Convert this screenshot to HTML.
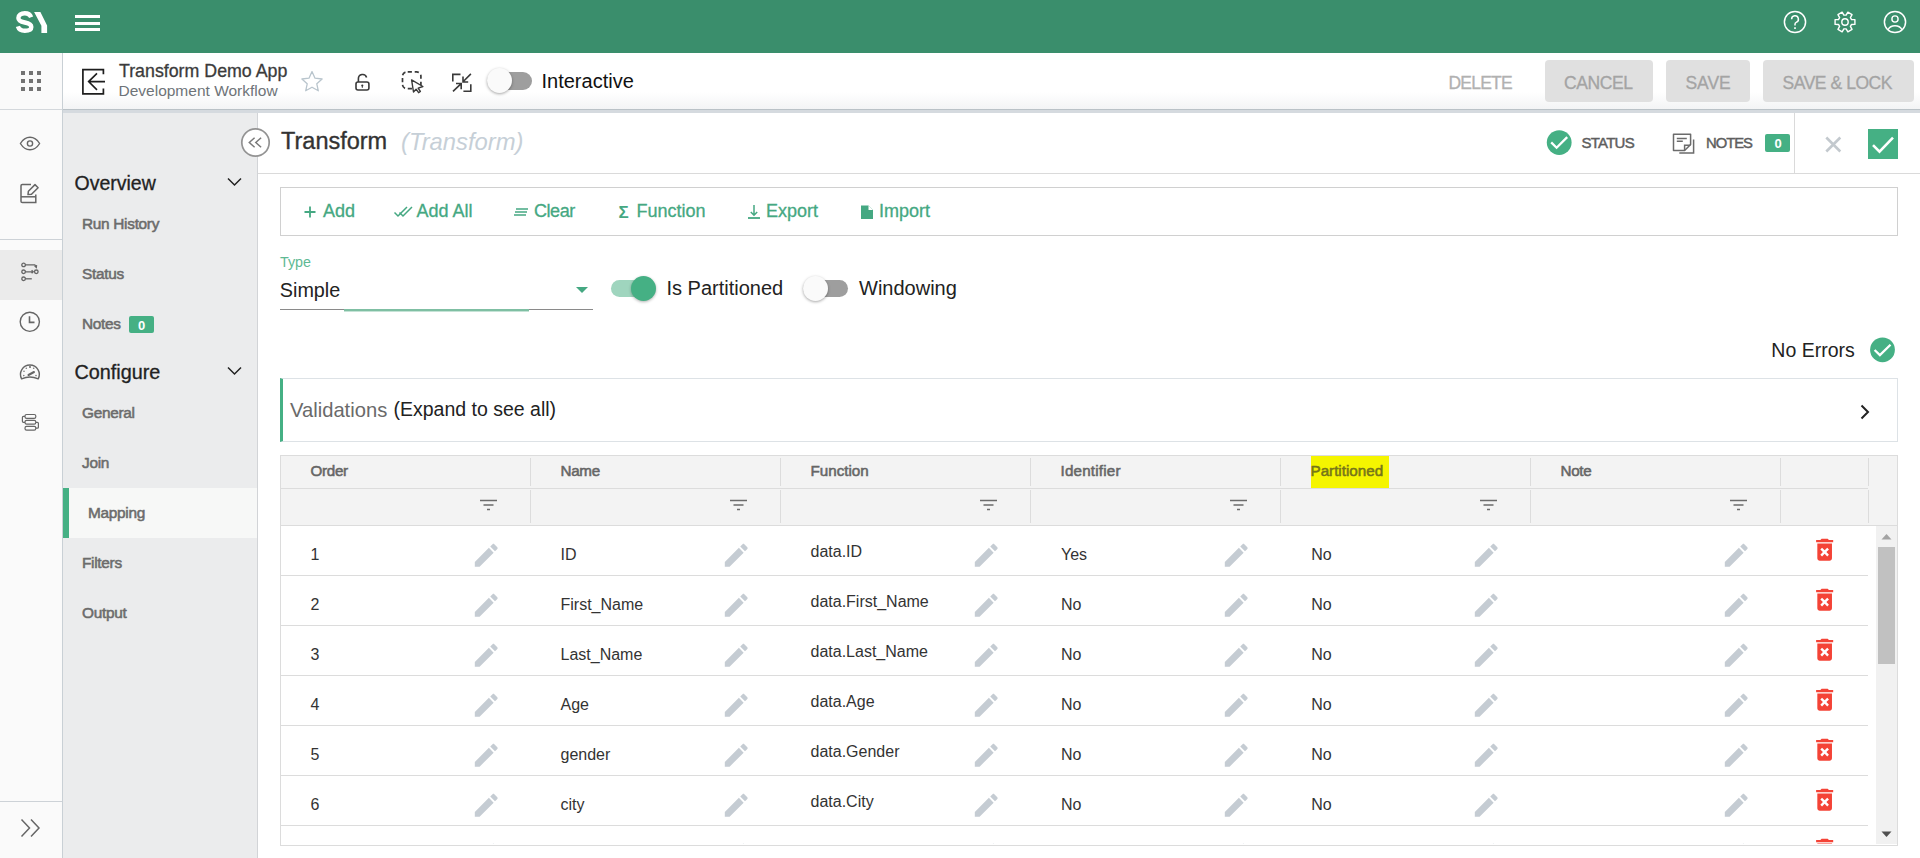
<!DOCTYPE html>
<html><head><meta charset="utf-8"><title>Transform</title>
<style>
html,body{margin:0;padding:0;}
body{width:1920px;height:858px;overflow:hidden;position:relative;background:#fff;font-family:"Liberation Sans",sans-serif;}
.t{position:absolute;line-height:1;white-space:pre;}
.r{position:absolute;display:block;}
</style></head><body>

<div class="r" style="left:0px;top:0px;width:1920px;height:53px;background:#3a8e6c;"></div>
<svg class="r" style="left:0px;top:0px;" width="60" height="53" viewBox="0 0 60 53"><path d="M31.1 17.3C30.2 14.7 27.8 13.3 24.8 13.3C21 13.3 18.4 15.2 18.4 18C18.4 21 21.2 21.8 24.8 22.5C28.6 23.2 31.3 24.3 31.3 27.1C31.3 29.6 28.6 30.8 24.8 30.8C21.4 30.8 18.8 29.4 17.9 26.4" fill="none" stroke="#fff" stroke-width="4.4"/></svg>
<svg class="r" style="left:33px;top:11px;" width="16" height="23" viewBox="0 0 16 23"><polygon points="1.1,1.1 7.4,1.1 14.1,14.4 14.1,21.9 8.4,21.9 8.4,14.8" fill="#fff"/></svg>
<div class="r" style="left:75px;top:15px;width:25px;height:3px;background:#fff;"></div>
<div class="r" style="left:75px;top:21.5px;width:25px;height:3.0px;background:#fff;"></div>
<div class="r" style="left:75px;top:28px;width:25px;height:3px;background:#fff;"></div>
<svg class="r" style="left:1783px;top:10px;" width="24" height="24" viewBox="0 0 24 24"><circle cx="12" cy="12" r="10.6" fill="none" stroke="#fff" stroke-width="1.5"/><path d="M8.6 9.2a3.4 3.4 0 1 1 4.6 3.2c-.8.3-1.2.9-1.2 1.8v1.3" fill="none" stroke="#fff" stroke-width="1.5"/><rect x="11.2" y="17.2" width="1.6" height="1.8" fill="#fff"/></svg>
<svg class="r" style="left:1833px;top:10.2px;" width="24" height="24" viewBox="0 0 24 24"><path d="M18.55 9.53 L21.91 9.58 L21.91 14.42 L18.55 14.47 L17.41 16.44 L19.05 19.37 L14.85 21.79 L13.14 18.91 L10.86 18.91 L9.15 21.79 L4.95 19.37 L6.59 16.44 L5.45 14.47 L2.09 14.42 L2.09 9.58 L5.45 9.53 L6.59 7.56 L4.95 4.63 L9.15 2.21 L10.86 5.09 L13.14 5.09 L14.85 2.21 L19.05 4.63 L17.41 7.56Z" fill="none" stroke="#fff" stroke-width="1.4" stroke-linejoin="round"/><circle cx="12" cy="12" r="3.2" fill="none" stroke="#fff" stroke-width="1.4"/></svg>
<svg class="r" style="left:1883px;top:10px;" width="24" height="24" viewBox="0 0 24 24"><circle cx="12" cy="12" r="10.6" fill="none" stroke="#fff" stroke-width="1.5"/><circle cx="12" cy="9" r="3.1" fill="none" stroke="#fff" stroke-width="1.4"/><path d="M5 19.8c1.3-2.7 3.8-4.1 7-4.1s5.7 1.4 7 4.1" fill="none" stroke="#fff" stroke-width="1.4"/></svg>
<div class="r" style="left:0px;top:53px;width:62px;height:56px;background:#fafafa;"></div>
<div class="r" style="left:62px;top:53px;width:1px;height:805px;background:#c9d0d5;"></div>
<div class="r" style="left:63px;top:53px;width:1857px;height:56px;background:linear-gradient(#fff 0,#fff 70%,#f3f4f5 100%)"></div>
<div class="r" style="left:0px;top:109px;width:62px;height:1px;background:#d4d8dc;"></div>
<div class="r" style="left:63px;top:109px;width:1857px;height:1px;background:#bac2c7;"></div>
<div class="r" style="left:63px;top:110px;width:1857px;height:3px;background:#d5dadf;"></div>
<div class="r" style="left:21px;top:71px;width:4px;height:4px;background:#737373;"></div>
<div class="r" style="left:21px;top:79px;width:4px;height:4px;background:#737373;"></div>
<div class="r" style="left:21px;top:87px;width:4px;height:4px;background:#737373;"></div>
<div class="r" style="left:29px;top:71px;width:4px;height:4px;background:#737373;"></div>
<div class="r" style="left:29px;top:79px;width:4px;height:4px;background:#737373;"></div>
<div class="r" style="left:29px;top:87px;width:4px;height:4px;background:#737373;"></div>
<div class="r" style="left:37px;top:71px;width:4px;height:4px;background:#737373;"></div>
<div class="r" style="left:37px;top:79px;width:4px;height:4px;background:#737373;"></div>
<div class="r" style="left:37px;top:87px;width:4px;height:4px;background:#737373;"></div>
<svg class="r" style="left:80px;top:67px;" width="28" height="30" viewBox="0 0 28 30"><path d="M23.4 7.2V2.6H2.9v24.2h20.5v-5.4" fill="none" stroke="#1e1e1e" stroke-width="1.7"/><path d="M25 14.6H8.6M17 6.4L8.6 14.6l8.4 8.3" fill="none" stroke="#1e1e1e" stroke-width="1.6"/></svg>
<div class="t" style="left:119.0px;top:63.3px;font-size:17.8px;font-weight:400;color:#3b3b3b;letter-spacing:0px;font-style:normal;-webkit-text-stroke:0.3px #3b3b3b;">Transform Demo App</div>
<div class="t" style="left:118.5px;top:82.7px;font-size:15.5px;font-weight:400;color:#6e7378;letter-spacing:0px;font-style:normal;">Development Workflow</div>
<svg class="r" style="left:300px;top:70px;" width="24" height="23" viewBox="0 0 24 23"><path d="M12 1.6l3 6.6 7.1.8-5.3 4.8 1.5 7-6.3-3.6-6.3 3.6 1.5-7L1.9 9l7.1-.8z" fill="none" stroke="#b9c5cd" stroke-width="1.3" stroke-linejoin="round"/></svg>
<svg class="r" style="left:352px;top:71px;" width="20" height="22" viewBox="0 0 20 22"><rect x="4" y="11" width="12.9" height="8" rx="2" fill="none" stroke="#3a3a3a" stroke-width="1.6"/><path d="M6.4 11V7.8a4.2 4.2 0 0 1 8.2-1.4" fill="none" stroke="#3a3a3a" stroke-width="1.6"/><circle cx="10.3" cy="14.5" r="1.1" fill="#3a3a3a"/><rect x="9.8" y="14.6" width="1" height="2.2" fill="#3a3a3a"/></svg>
<svg class="r" style="left:400px;top:69px;" width="26" height="26" viewBox="0 0 26 26"><rect x="2.5" y="2.9" width="18.4" height="16.8" rx="4.2" fill="none" stroke="#3a3a3a" stroke-width="1.7" stroke-dasharray="4.2 2.8" stroke-dashoffset="-1"/><path d="M11.6 10.9L13.5 23l2.6-2.8 2.5 3.5 1.8-1.2-2.3-3.3 4.8-1.7z" fill="#fff" stroke="#3a3a3a" stroke-width="1.4" stroke-linejoin="round"/></svg>
<svg class="r" style="left:450px;top:71px;" width="24" height="23" viewBox="0 0 24 23"><g fill="none" stroke="#3a3a3a" stroke-width="1.6"><path d="M2.8 10.4V3.4h7.7"/><path d="M20.9 2.9L13.3 10.5M13 5.6V11h5.2"/><path d="M3 20.3l7.9-7.5M6 12.5h5.2v5.7"/><path d="M20.8 13.3v7h-7.4"/></g></svg>
<div class="r" style="left:487px;top:72px;width:45px;height:18px;border-radius:9px;background:#9e9e9e"></div>
<div class="r" style="left:487px;top:68px;width:25px;height:25px;border-radius:50%;background:#fafafa;box-shadow:0 1px 3px rgba(0,0,0,.35)"></div>
<div class="t" style="left:541.5px;top:71.0px;font-size:20px;font-weight:400;color:#111;letter-spacing:0px;font-style:normal;">Interactive</div>
<div class="t" style="left:1448.5px;top:75.3px;font-size:17.5px;font-weight:400;color:#b1b1b1;letter-spacing:-0.8px;font-style:normal;-webkit-text-stroke:0.3px #b1b1b1;">DELETE</div>
<div class="r" style="left:1545px;top:60px;width:108px;height:42px;border-radius:4px;background:#e0e0e0"></div>
<div class="t" style="left:1564.0px;top:75.3px;font-size:17.5px;font-weight:400;color:#a4a4a4;letter-spacing:-0.39999999999999997px;font-style:normal;-webkit-text-stroke:0.3px #a4a4a4;">CANCEL</div>
<div class="r" style="left:1666px;top:60px;width:84px;height:42px;border-radius:4px;background:#e0e0e0"></div>
<div class="t" style="left:1685.5px;top:75.3px;font-size:17.5px;font-weight:400;color:#a4a4a4;letter-spacing:-0.05px;font-style:normal;-webkit-text-stroke:0.3px #a4a4a4;">SAVE</div>
<div class="r" style="left:1763px;top:60px;width:151px;height:42px;border-radius:4px;background:#e0e0e0"></div>
<div class="t" style="left:1782.5px;top:75.3px;font-size:17.5px;font-weight:400;color:#a4a4a4;letter-spacing:-0.45px;font-style:normal;-webkit-text-stroke:0.3px #a4a4a4;">SAVE &amp; LOCK</div>
<div class="r" style="left:0px;top:110px;width:62px;height:748px;background:#fafafa;"></div>
<svg class="r" style="left:18px;top:134px;" width="24" height="20" viewBox="0 0 24 20"><path d="M2.4 9.5c2.5-4.1 5.7-6.2 9.6-6.2s7.1 2.1 9.6 6.2c-2.5 4.1-5.7 6.2-9.6 6.2S4.9 13.6 2.4 9.5z" fill="none" stroke="#666" stroke-width="1.4"/><circle cx="12" cy="9.5" r="2.6" fill="none" stroke="#666" stroke-width="1.4"/></svg>
<svg class="r" style="left:18px;top:181px;" width="24" height="24" viewBox="0 0 24 24"><path d="M13 3.5H4.3a1.3 1.3 0 0 0-1.3 1.3v15.4a1.3 1.3 0 0 0 1.3 1.3h13.5v-8" fill="none" stroke="#666" stroke-width="1.5"/><path d="M3 15.8h14.8" fill="none" stroke="#666" stroke-width="1.5"/><path d="M10 13.6l.4-3.4 6.6-6.6 3.1 3.1-6.6 6.6z" fill="none" stroke="#666" stroke-width="1.5" stroke-linejoin="round"/></svg>
<div class="r" style="left:0px;top:239px;width:62px;height:1px;background:#cdd2d7;"></div>
<div class="r" style="left:0px;top:250px;width:62px;height:50px;background:#ebebeb;"></div>
<svg class="r" style="left:19px;top:260px;" width="22" height="23" viewBox="0 0 22 23"><g fill="none" stroke="#666" stroke-width="1.3"><circle cx="4.6" cy="4.9" r="1.8"/><circle cx="4.6" cy="11.8" r="1.8"/><circle cx="4.6" cy="18.8" r="1.8"/><circle cx="17.3" cy="11.8" r="1.8"/><path d="M6.4 4.9h9.4l1.5 2"/><path d="M15.6 5.9l1.7 1.6.3-2.3"/><path d="M6.4 11.8h7.8M12.6 10.3l1.6 1.5-1.6 1.5"/><path d="M6.4 18.8h6.4"/></g></svg>
<svg class="r" style="left:18px;top:310px;" width="24" height="24" viewBox="0 0 24 24"><circle cx="11.8" cy="11.8" r="9.6" fill="none" stroke="#666" stroke-width="1.4"/><path d="M11.5 6.2V12.4h5" fill="none" stroke="#666" stroke-width="1.6"/></svg>
<svg class="r" style="left:18px;top:362px;" width="24" height="20" viewBox="0 0 24 20"><path d="M3.6 16.8A9.4 9.4 0 1 1 20.2 16.8Q11.9 13.2 3.6 16.8z" fill="none" stroke="#666" stroke-width="1.4" stroke-linejoin="round"/><path d="M10.5 13l5.5-3" stroke="#666" stroke-width="2" stroke-linecap="round"/><circle cx="5.8" cy="13.6" r=".8" fill="#777"/><circle cx="6" cy="9.3" r=".8" fill="#777"/><circle cx="8.3" cy="6.2" r=".8" fill="#777"/><circle cx="12" cy="5" r=".9" fill="#555"/><circle cx="15.7" cy="6.2" r=".8" fill="#777"/><circle cx="18" cy="13.6" r=".8" fill="#777"/></svg>
<svg class="r" style="left:19px;top:411px;" width="22" height="22" viewBox="0 0 22 22"><g fill="none" stroke="#666" stroke-width="1.2"><rect x="6" y="3.5" width="10.8" height="3.8" rx="1.6"/><rect x="6" y="9.4" width="10.8" height="3.8" rx="1.6"/><rect x="6" y="15.3" width="10.8" height="3.8" rx="1.6"/><path d="M6 5.4H4.4a1 1 0 0 0-1 1v3.9a1 1 0 0 0 1 1H6"/><path d="M16.8 11.3h1.6a1 1 0 0 1 1 1v3.9a1 1 0 0 1-1 1h-1.6"/></g></svg>
<div class="r" style="left:0px;top:801px;width:62px;height:1px;background:#cdd2d7;"></div>
<svg class="r" style="left:19px;top:817px;" width="24" height="22" viewBox="0 0 24 22"><path d="M2.5 2.5l8 8.5-8 8.5M12 2.5l8 8.5-8 8.5" fill="none" stroke="#666" stroke-width="1.5"/></svg>
<div class="r" style="left:63px;top:113px;width:194px;height:745px;background:#ebeced;"></div>
<div class="r" style="left:257px;top:113px;width:1px;height:745px;background:#d2d4d7;"></div>
<div class="t" style="left:74.5px;top:173.6px;font-size:19.5px;font-weight:400;color:#222;letter-spacing:0px;font-style:normal;-webkit-text-stroke:0.3px #222;">Overview</div>
<svg class="r" style="left:226px;top:176px;" width="17" height="12" viewBox="0 0 17 12"><path d="M2 2.5l6.5 6.5 6.5-6.5" fill="none" stroke="#222" stroke-width="1.5"/></svg>
<div class="t" style="left:82.0px;top:215.9px;font-size:15.4px;font-weight:400;color:#6c6c6c;letter-spacing:-0.3px;font-style:normal;-webkit-text-stroke:0.55px #6c6c6c;">Run History</div>
<div class="t" style="left:82.0px;top:265.7px;font-size:15.4px;font-weight:400;color:#6c6c6c;letter-spacing:-0.3px;font-style:normal;-webkit-text-stroke:0.55px #6c6c6c;">Status</div>
<div class="t" style="left:82.0px;top:315.7px;font-size:15.4px;font-weight:400;color:#6c6c6c;letter-spacing:-0.3px;font-style:normal;-webkit-text-stroke:0.55px #6c6c6c;">Notes</div>
<div class="r" style="left:129px;top:316px;width:25px;height:17px;border-radius:2px;background:#45b084"></div>
<div class="t" style="left:138.0px;top:319.2px;font-size:13px;font-weight:700;color:#fff;letter-spacing:0px;font-style:normal;">0</div>
<div class="t" style="left:74.5px;top:362.7px;font-size:19.8px;font-weight:400;color:#222;letter-spacing:0px;font-style:normal;-webkit-text-stroke:0.3px #222;">Configure</div>
<svg class="r" style="left:226px;top:365px;" width="17" height="12" viewBox="0 0 17 12"><path d="M2 2.5l6.5 6.5 6.5-6.5" fill="none" stroke="#222" stroke-width="1.5"/></svg>
<div class="t" style="left:82.0px;top:404.9px;font-size:15.4px;font-weight:400;color:#6c6c6c;letter-spacing:-0.3px;font-style:normal;-webkit-text-stroke:0.55px #6c6c6c;">General</div>
<div class="t" style="left:82.0px;top:454.9px;font-size:15.4px;font-weight:400;color:#6c6c6c;letter-spacing:-0.3px;font-style:normal;-webkit-text-stroke:0.55px #6c6c6c;">Join</div>
<div class="r" style="left:63px;top:488px;width:194px;height:50px;background:#f7f8f7;"></div>
<div class="r" style="left:63px;top:488px;width:6px;height:50px;background:#45b084;"></div>
<div class="t" style="left:88.0px;top:504.9px;font-size:15.4px;font-weight:400;color:#6c6c6c;letter-spacing:-0.3px;font-style:normal;-webkit-text-stroke:0.55px #6c6c6c;">Mapping</div>
<div class="t" style="left:82.0px;top:554.9px;font-size:15.4px;font-weight:400;color:#6c6c6c;letter-spacing:-0.3px;font-style:normal;-webkit-text-stroke:0.55px #6c6c6c;">Filters</div>
<div class="t" style="left:82.0px;top:604.9px;font-size:15.4px;font-weight:400;color:#6c6c6c;letter-spacing:-0.3px;font-style:normal;-webkit-text-stroke:0.55px #6c6c6c;">Output</div>
<div class="r" style="left:258px;top:173px;width:1662px;height:1px;background:#dadada;"></div>
<div class="r" style="left:1794px;top:113px;width:1px;height:60px;background:#dadada;"></div>
<svg class="r" style="left:240px;top:127px;" width="31" height="31" viewBox="0 0 31 31"><circle cx="15.5" cy="15.5" r="13.7" fill="#fff" stroke="#939393" stroke-width="1.7"/><path d="M14.6 10.7L9.3 15.5l5.3 4.7M21.1 10.7L15.8 15.5l5.3 4.7" fill="none" stroke="#7a7a7a" stroke-width="1.5"/></svg>
<div class="t" style="left:281.0px;top:130.4px;font-size:23.5px;font-weight:400;color:#333;letter-spacing:0px;font-style:normal;-webkit-text-stroke:0.35px #333;">Transform</div>
<div class="t" style="left:401.0px;top:130.4px;font-size:23.8px;font-weight:400;color:#c6cfd7;letter-spacing:0px;font-style:italic;">(Transform)</div>
<svg class="r" style="left:1546px;top:130px;" width="26" height="26" viewBox="0 0 26 26"><circle cx="13.2" cy="12.6" r="12.4" fill="#45b084"/><path d="M5.2 12.4l5.4 5.3 10.6-10.6" fill="none" stroke="#fff" stroke-width="2.3"/></svg>
<div class="t" style="left:1581.5px;top:135.2px;font-size:15px;font-weight:400;color:#5e5e5e;letter-spacing:-0.75px;font-style:normal;-webkit-text-stroke:0.45px #5e5e5e;">STATUS</div>
<svg class="r" style="left:1671px;top:132px;" width="26" height="24" viewBox="0 0 26 24"><g fill="none" stroke="#6b6b6b" stroke-width="1.5"><path d="M2.5 2.3h17.1v10.2l-6 6H2.5z" stroke-linejoin="round"/><path d="M13.6 18.5v-5.2h5.8"/><path d="M5.8 6.6h10M5.8 9.2h6"/><path d="M22.6 7.6V21H8.3"/></g></svg>
<div class="t" style="left:1706.0px;top:135.7px;font-size:14.8px;font-weight:400;color:#5e5e5e;letter-spacing:-1.0px;font-style:normal;-webkit-text-stroke:0.45px #5e5e5e;">NOTES</div>
<div class="r" style="left:1765px;top:134px;width:25px;height:18px;border-radius:2px;background:#45b084"></div>
<div class="t" style="left:1774.5px;top:137.4px;font-size:13px;font-weight:700;color:#fff;letter-spacing:0px;font-style:normal;">0</div>
<svg class="r" style="left:1822px;top:133px;" width="22" height="22" viewBox="0 0 22 22"><path d="M4.3 4.5l14 14M18.3 4.5l-14 14" stroke="#c3c9ce" stroke-width="2.6"/></svg>
<div class="r" style="left:1868px;top:129px;width:30px;height:30px;background:#45b084;"></div>
<svg class="r" style="left:1868px;top:129px;" width="30" height="30" viewBox="0 0 30 30"><path d="M5 16.1l6.5 6.5 13.5-13.9" fill="none" stroke="#fff" stroke-width="2.6"/></svg>
<div class="r" style="left:280px;top:187px;width:1616px;height:47px;border:1px solid #d0d0d0"></div>
<svg class="r" style="left:302px;top:204px;" width="16" height="16" viewBox="0 0 16 16"><path d="M8 2.5v11M2.5 8h11" stroke="#45a882" stroke-width="1.8"/></svg>
<div class="t" style="left:323.0px;top:201.9px;font-size:18px;font-weight:400;color:#45a882;letter-spacing:0px;font-style:normal;-webkit-text-stroke:0.3px #45a882;">Add</div>
<svg class="r" style="left:393px;top:205px;" width="21" height="13" viewBox="0 0 21 13"><path d="M1.5 7.5l3.5 3.5 9-9M6.5 7.5l3.5 3.5 9-9" fill="none" stroke="#45a882" stroke-width="1.5"/></svg>
<div class="t" style="left:416.5px;top:201.9px;font-size:18px;font-weight:400;color:#45a882;letter-spacing:0px;font-style:normal;-webkit-text-stroke:0.3px #45a882;">Add All</div>
<svg class="r" style="left:512px;top:206px;" width="18" height="12" viewBox="0 0 18 12"><path d="M4 3h12M3 6h12M2 9h12" stroke="#45a882" stroke-width="1.6"/></svg>
<div class="t" style="left:534.0px;top:201.9px;font-size:18px;font-weight:400;color:#45a882;letter-spacing:-0.45px;font-style:normal;-webkit-text-stroke:0.3px #45a882;">Clear</div>
<div class="t" style="left:618.5px;top:203.9px;font-size:17px;font-weight:700;color:#45a882;letter-spacing:0px;font-style:normal;">Σ</div>
<div class="t" style="left:636.5px;top:201.9px;font-size:18px;font-weight:400;color:#45a882;letter-spacing:0px;font-style:normal;-webkit-text-stroke:0.3px #45a882;">Function</div>
<svg class="r" style="left:746px;top:203px;" width="16" height="17" viewBox="0 0 16 17"><path d="M8 2v10M4.8 9l3.2 3.2 3.2-3.2" fill="none" stroke="#45a882" stroke-width="1.5"/><path d="M2 15h12" stroke="#45a882" stroke-width="1.8"/></svg>
<div class="t" style="left:766.0px;top:201.9px;font-size:18px;font-weight:400;color:#45a882;letter-spacing:0px;font-style:normal;-webkit-text-stroke:0.3px #45a882;">Export</div>
<svg class="r" style="left:859px;top:204px;" width="16" height="16" viewBox="0 0 16 16"><path d="M2 1.5h7.5l4.5 4.5v9H2z" fill="#45a882"/><path d="M9.5 1.5v4.5h4.5" fill="#fff"/></svg>
<div class="t" style="left:879.0px;top:201.9px;font-size:18px;font-weight:400;color:#45a882;letter-spacing:0px;font-style:normal;-webkit-text-stroke:0.3px #45a882;">Import</div>
<div class="t" style="left:280.0px;top:255.0px;font-size:14.3px;font-weight:400;color:#5eb994;letter-spacing:0px;font-style:normal;">Type</div>
<div class="t" style="left:279.8px;top:280.6px;font-size:19.8px;font-weight:400;color:#222;letter-spacing:0px;font-style:normal;">Simple</div>
<svg class="r" style="left:574px;top:285px;" width="16" height="10" viewBox="0 0 16 10"><path d="M2 2h12l-6 6z" fill="#45a882"/></svg>
<div class="r" style="left:280px;top:309px;width:313px;height:1px;background:#8a8a8a;"></div>
<div class="r" style="left:344px;top:309px;width:185px;height:2px;background:#7fbfa3;"></div>
<div class="r" style="left:344px;top:311px;width:185px;height:1px;background:#c5e3d6;"></div>
<div class="r" style="left:611px;top:280px;width:40px;height:17px;border-radius:8.5px;background:#9fd5be"></div>
<div class="r" style="left:631px;top:276px;width:25px;height:25px;border-radius:50%;background:#45b084;box-shadow:0 1px 3px rgba(0,0,0,.3)"></div>
<div class="t" style="left:666.5px;top:278.2px;font-size:20px;font-weight:400;color:#222;letter-spacing:0px;font-style:normal;">Is Partitioned</div>
<div class="r" style="left:803px;top:280px;width:45px;height:17px;border-radius:8.5px;background:#9e9e9e"></div>
<div class="r" style="left:803px;top:276px;width:25px;height:25px;border-radius:50%;background:#fafafa;box-shadow:0 1px 3px rgba(0,0,0,.35)"></div>
<div class="t" style="left:859.0px;top:278.2px;font-size:20px;font-weight:400;color:#222;letter-spacing:0px;font-style:normal;">Windowing</div>
<div class="t" style="left:1771.3px;top:340.6px;font-size:19.5px;font-weight:400;color:#222;letter-spacing:0px;font-style:normal;">No Errors</div>
<svg class="r" style="left:1870px;top:337px;" width="26" height="26" viewBox="0 0 26 26"><circle cx="12.5" cy="12.8" r="12.4" fill="#45b084"/><path d="M4.6 13l5.3 5.1 10.6-10.4" fill="none" stroke="#fff" stroke-width="2.3"/></svg>
<div class="r" style="left:280px;top:378px;width:1616px;height:62px;border:1px solid #dde2e6;border-left:3px solid #45b084;box-sizing:content-box;width:1614px"></div>
<div class="t" style="left:290.0px;top:399.8px;font-size:20.2px;font-weight:400;color:#6a6a6a;letter-spacing:0px;font-style:normal;">Validations</div>
<div class="t" style="left:393.5px;top:400.4px;font-size:19.5px;font-weight:400;color:#222;letter-spacing:0px;font-style:normal;">(Expand to see all)</div>
<svg class="r" style="left:1858px;top:403px;" width="14" height="18" viewBox="0 0 14 18"><path d="M3.5 2.5l6.5 6.5-6.5 6.5" fill="none" stroke="#222" stroke-width="2"/></svg>
<div class="r" style="left:280px;top:455px;width:1616px;height:389px;border:1px solid #dcdcdc"></div>
<div class="r" style="left:281px;top:456px;width:1616px;height:69px;background:#f3f3f3;"></div>
<div class="r" style="left:281px;top:488px;width:1587px;height:1px;background:#dcdcdc;"></div>
<div class="r" style="left:281px;top:525px;width:1616px;height:1px;background:#dcdcdc;"></div>
<div class="r" style="left:530px;top:458px;width:1px;height:28px;background:#dcdcdc;"></div>
<div class="r" style="left:530px;top:490px;width:1px;height:33px;background:#dcdcdc;"></div>
<div class="r" style="left:780px;top:458px;width:1px;height:28px;background:#dcdcdc;"></div>
<div class="r" style="left:780px;top:490px;width:1px;height:33px;background:#dcdcdc;"></div>
<div class="r" style="left:1030px;top:458px;width:1px;height:28px;background:#dcdcdc;"></div>
<div class="r" style="left:1030px;top:490px;width:1px;height:33px;background:#dcdcdc;"></div>
<div class="r" style="left:1280px;top:458px;width:1px;height:28px;background:#dcdcdc;"></div>
<div class="r" style="left:1280px;top:490px;width:1px;height:33px;background:#dcdcdc;"></div>
<div class="r" style="left:1530px;top:458px;width:1px;height:28px;background:#dcdcdc;"></div>
<div class="r" style="left:1530px;top:490px;width:1px;height:33px;background:#dcdcdc;"></div>
<div class="r" style="left:1780px;top:458px;width:1px;height:28px;background:#dcdcdc;"></div>
<div class="r" style="left:1780px;top:490px;width:1px;height:33px;background:#dcdcdc;"></div>
<div class="r" style="left:1868px;top:458px;width:1px;height:28px;background:#dcdcdc;"></div>
<div class="r" style="left:1868px;top:490px;width:1px;height:33px;background:#dcdcdc;"></div>
<div class="t" style="left:310.5px;top:462.8px;font-size:15.2px;font-weight:400;color:#666;letter-spacing:-0.3px;font-style:normal;-webkit-text-stroke:0.55px #666;">Order</div>
<svg class="r" style="left:479px;top:499px;" width="19" height="13" viewBox="0 0 19 13"><path d="M1 1.5h17M4.5 6h10M8 10.5h3" stroke="#6b6b6b" stroke-width="1.6"/></svg>
<div class="t" style="left:560.5px;top:462.8px;font-size:15.2px;font-weight:400;color:#666;letter-spacing:-0.3px;font-style:normal;-webkit-text-stroke:0.55px #666;">Name</div>
<svg class="r" style="left:729px;top:499px;" width="19" height="13" viewBox="0 0 19 13"><path d="M1 1.5h17M4.5 6h10M8 10.5h3" stroke="#6b6b6b" stroke-width="1.6"/></svg>
<div class="t" style="left:810.5px;top:462.8px;font-size:15.2px;font-weight:400;color:#666;letter-spacing:0.0px;font-style:normal;-webkit-text-stroke:0.55px #666;">Function</div>
<svg class="r" style="left:979px;top:499px;" width="19" height="13" viewBox="0 0 19 13"><path d="M1 1.5h17M4.5 6h10M8 10.5h3" stroke="#6b6b6b" stroke-width="1.6"/></svg>
<div class="t" style="left:1060.5px;top:462.8px;font-size:15.2px;font-weight:400;color:#666;letter-spacing:0.2px;font-style:normal;-webkit-text-stroke:0.55px #666;">Identifier</div>
<svg class="r" style="left:1229px;top:499px;" width="19" height="13" viewBox="0 0 19 13"><path d="M1 1.5h17M4.5 6h10M8 10.5h3" stroke="#6b6b6b" stroke-width="1.6"/></svg>
<div class="r" style="left:1311px;top:456px;width:78px;height:32px;background:#f5f500;"></div>
<div class="t" style="left:1310.5px;top:462.8px;font-size:15.2px;font-weight:400;color:#76761a;letter-spacing:0.0px;font-style:normal;-webkit-text-stroke:0.55px #76761a;">Partitioned</div>
<svg class="r" style="left:1479px;top:499px;" width="19" height="13" viewBox="0 0 19 13"><path d="M1 1.5h17M4.5 6h10M8 10.5h3" stroke="#6b6b6b" stroke-width="1.6"/></svg>
<div class="t" style="left:1560.5px;top:462.8px;font-size:15.2px;font-weight:400;color:#666;letter-spacing:-0.3px;font-style:normal;-webkit-text-stroke:0.55px #666;">Note</div>
<svg class="r" style="left:1729px;top:499px;" width="19" height="13" viewBox="0 0 19 13"><path d="M1 1.5h17M4.5 6h10M8 10.5h3" stroke="#6b6b6b" stroke-width="1.6"/></svg>
<div class="r" style="left:281px;top:526px;width:1595px;height:318px;overflow:hidden">
<div class="t" style="left:29.5px;top:21.0px;font-size:16px;color:#333">1</div>
<div class="t" style="left:279.5px;top:21.0px;font-size:16px;color:#333">ID</div>
<div class="t" style="left:529.5px;top:17.7px;font-size:16px;color:#333">data.ID</div>
<div class="t" style="left:780.0px;top:21.0px;font-size:16px;color:#333">Yes</div>
<div class="t" style="left:1030.2px;top:21.0px;font-size:16px;color:#333">No</div>
<svg class="r" style="left:189.7px;top:13.6px" width="30.5" height="30.5" viewBox="0 0 24 24"><path d="M3 17.25V21h3.75L17.81 9.94l-3.75-3.75L3 17.25zM20.71 7.04c.39-.39.39-1.02 0-1.41l-2.34-2.34c-.39-.39-1.02-.39-1.41 0l-1.83 1.83 3.75 3.75 1.83-1.83z" fill="#c5ccd3"/></svg>
<svg class="r" style="left:439.70000000000005px;top:13.6px" width="30.5" height="30.5" viewBox="0 0 24 24"><path d="M3 17.25V21h3.75L17.81 9.94l-3.75-3.75L3 17.25zM20.71 7.04c.39-.39.39-1.02 0-1.41l-2.34-2.34c-.39-.39-1.02-.39-1.41 0l-1.83 1.83 3.75 3.75 1.83-1.83z" fill="#c5ccd3"/></svg>
<svg class="r" style="left:689.7px;top:13.6px" width="30.5" height="30.5" viewBox="0 0 24 24"><path d="M3 17.25V21h3.75L17.81 9.94l-3.75-3.75L3 17.25zM20.71 7.04c.39-.39.39-1.02 0-1.41l-2.34-2.34c-.39-.39-1.02-.39-1.41 0l-1.83 1.83 3.75 3.75 1.83-1.83z" fill="#c5ccd3"/></svg>
<svg class="r" style="left:939.7px;top:13.6px" width="30.5" height="30.5" viewBox="0 0 24 24"><path d="M3 17.25V21h3.75L17.81 9.94l-3.75-3.75L3 17.25zM20.71 7.04c.39-.39.39-1.02 0-1.41l-2.34-2.34c-.39-.39-1.02-.39-1.41 0l-1.83 1.83 3.75 3.75 1.83-1.83z" fill="#c5ccd3"/></svg>
<svg class="r" style="left:1189.7px;top:13.6px" width="30.5" height="30.5" viewBox="0 0 24 24"><path d="M3 17.25V21h3.75L17.81 9.94l-3.75-3.75L3 17.25zM20.71 7.04c.39-.39.39-1.02 0-1.41l-2.34-2.34c-.39-.39-1.02-.39-1.41 0l-1.83 1.83 3.75 3.75 1.83-1.83z" fill="#c5ccd3"/></svg>
<svg class="r" style="left:1439.7px;top:13.6px" width="30.5" height="30.5" viewBox="0 0 24 24"><path d="M3 17.25V21h3.75L17.81 9.94l-3.75-3.75L3 17.25zM20.71 7.04c.39-.39.39-1.02 0-1.41l-2.34-2.34c-.39-.39-1.02-.39-1.41 0l-1.83 1.83 3.75 3.75 1.83-1.83z" fill="#c5ccd3"/></svg>
<svg class="r" style="left:1528.7px;top:9.3px" width="29.3" height="29.3" viewBox="0 0 24 24"><path d="M6 19c0 1.1.9 2 2 2h8c1.1 0 2-.9 2-2V7H6v12zm2.46-7.12l1.41-1.41L12 12.59l2.12-2.12 1.41 1.41L13.41 14l2.12 2.12-1.41 1.41L12 15.41l-2.12 2.12-1.41-1.41L10.59 14l-2.13-2.12zM15.5 4l-1-1h-5l-1 1H5v2h14V4z" fill="#f44336"/></svg>
<div class="r" style="left:0px;top:49px;width:1587px;height:1px;background:#dcdcdc;"></div>
<div class="t" style="left:29.5px;top:71.0px;font-size:16px;color:#333">2</div>
<div class="t" style="left:279.5px;top:71.0px;font-size:16px;color:#333">First_Name</div>
<div class="t" style="left:529.5px;top:67.7px;font-size:16px;color:#333">data.First_Name</div>
<div class="t" style="left:780.0px;top:71.0px;font-size:16px;color:#333">No</div>
<div class="t" style="left:1030.2px;top:71.0px;font-size:16px;color:#333">No</div>
<svg class="r" style="left:189.7px;top:63.6px" width="30.5" height="30.5" viewBox="0 0 24 24"><path d="M3 17.25V21h3.75L17.81 9.94l-3.75-3.75L3 17.25zM20.71 7.04c.39-.39.39-1.02 0-1.41l-2.34-2.34c-.39-.39-1.02-.39-1.41 0l-1.83 1.83 3.75 3.75 1.83-1.83z" fill="#c5ccd3"/></svg>
<svg class="r" style="left:439.70000000000005px;top:63.6px" width="30.5" height="30.5" viewBox="0 0 24 24"><path d="M3 17.25V21h3.75L17.81 9.94l-3.75-3.75L3 17.25zM20.71 7.04c.39-.39.39-1.02 0-1.41l-2.34-2.34c-.39-.39-1.02-.39-1.41 0l-1.83 1.83 3.75 3.75 1.83-1.83z" fill="#c5ccd3"/></svg>
<svg class="r" style="left:689.7px;top:63.6px" width="30.5" height="30.5" viewBox="0 0 24 24"><path d="M3 17.25V21h3.75L17.81 9.94l-3.75-3.75L3 17.25zM20.71 7.04c.39-.39.39-1.02 0-1.41l-2.34-2.34c-.39-.39-1.02-.39-1.41 0l-1.83 1.83 3.75 3.75 1.83-1.83z" fill="#c5ccd3"/></svg>
<svg class="r" style="left:939.7px;top:63.6px" width="30.5" height="30.5" viewBox="0 0 24 24"><path d="M3 17.25V21h3.75L17.81 9.94l-3.75-3.75L3 17.25zM20.71 7.04c.39-.39.39-1.02 0-1.41l-2.34-2.34c-.39-.39-1.02-.39-1.41 0l-1.83 1.83 3.75 3.75 1.83-1.83z" fill="#c5ccd3"/></svg>
<svg class="r" style="left:1189.7px;top:63.6px" width="30.5" height="30.5" viewBox="0 0 24 24"><path d="M3 17.25V21h3.75L17.81 9.94l-3.75-3.75L3 17.25zM20.71 7.04c.39-.39.39-1.02 0-1.41l-2.34-2.34c-.39-.39-1.02-.39-1.41 0l-1.83 1.83 3.75 3.75 1.83-1.83z" fill="#c5ccd3"/></svg>
<svg class="r" style="left:1439.7px;top:63.6px" width="30.5" height="30.5" viewBox="0 0 24 24"><path d="M3 17.25V21h3.75L17.81 9.94l-3.75-3.75L3 17.25zM20.71 7.04c.39-.39.39-1.02 0-1.41l-2.34-2.34c-.39-.39-1.02-.39-1.41 0l-1.83 1.83 3.75 3.75 1.83-1.83z" fill="#c5ccd3"/></svg>
<svg class="r" style="left:1528.7px;top:59.3px" width="29.3" height="29.3" viewBox="0 0 24 24"><path d="M6 19c0 1.1.9 2 2 2h8c1.1 0 2-.9 2-2V7H6v12zm2.46-7.12l1.41-1.41L12 12.59l2.12-2.12 1.41 1.41L13.41 14l2.12 2.12-1.41 1.41L12 15.41l-2.12 2.12-1.41-1.41L10.59 14l-2.13-2.12zM15.5 4l-1-1h-5l-1 1H5v2h14V4z" fill="#f44336"/></svg>
<div class="r" style="left:0px;top:99px;width:1587px;height:1px;background:#dcdcdc;"></div>
<div class="t" style="left:29.5px;top:121.0px;font-size:16px;color:#333">3</div>
<div class="t" style="left:279.5px;top:121.0px;font-size:16px;color:#333">Last_Name</div>
<div class="t" style="left:529.5px;top:117.7px;font-size:16px;color:#333">data.Last_Name</div>
<div class="t" style="left:780.0px;top:121.0px;font-size:16px;color:#333">No</div>
<div class="t" style="left:1030.2px;top:121.0px;font-size:16px;color:#333">No</div>
<svg class="r" style="left:189.7px;top:113.6px" width="30.5" height="30.5" viewBox="0 0 24 24"><path d="M3 17.25V21h3.75L17.81 9.94l-3.75-3.75L3 17.25zM20.71 7.04c.39-.39.39-1.02 0-1.41l-2.34-2.34c-.39-.39-1.02-.39-1.41 0l-1.83 1.83 3.75 3.75 1.83-1.83z" fill="#c5ccd3"/></svg>
<svg class="r" style="left:439.70000000000005px;top:113.6px" width="30.5" height="30.5" viewBox="0 0 24 24"><path d="M3 17.25V21h3.75L17.81 9.94l-3.75-3.75L3 17.25zM20.71 7.04c.39-.39.39-1.02 0-1.41l-2.34-2.34c-.39-.39-1.02-.39-1.41 0l-1.83 1.83 3.75 3.75 1.83-1.83z" fill="#c5ccd3"/></svg>
<svg class="r" style="left:689.7px;top:113.6px" width="30.5" height="30.5" viewBox="0 0 24 24"><path d="M3 17.25V21h3.75L17.81 9.94l-3.75-3.75L3 17.25zM20.71 7.04c.39-.39.39-1.02 0-1.41l-2.34-2.34c-.39-.39-1.02-.39-1.41 0l-1.83 1.83 3.75 3.75 1.83-1.83z" fill="#c5ccd3"/></svg>
<svg class="r" style="left:939.7px;top:113.6px" width="30.5" height="30.5" viewBox="0 0 24 24"><path d="M3 17.25V21h3.75L17.81 9.94l-3.75-3.75L3 17.25zM20.71 7.04c.39-.39.39-1.02 0-1.41l-2.34-2.34c-.39-.39-1.02-.39-1.41 0l-1.83 1.83 3.75 3.75 1.83-1.83z" fill="#c5ccd3"/></svg>
<svg class="r" style="left:1189.7px;top:113.6px" width="30.5" height="30.5" viewBox="0 0 24 24"><path d="M3 17.25V21h3.75L17.81 9.94l-3.75-3.75L3 17.25zM20.71 7.04c.39-.39.39-1.02 0-1.41l-2.34-2.34c-.39-.39-1.02-.39-1.41 0l-1.83 1.83 3.75 3.75 1.83-1.83z" fill="#c5ccd3"/></svg>
<svg class="r" style="left:1439.7px;top:113.6px" width="30.5" height="30.5" viewBox="0 0 24 24"><path d="M3 17.25V21h3.75L17.81 9.94l-3.75-3.75L3 17.25zM20.71 7.04c.39-.39.39-1.02 0-1.41l-2.34-2.34c-.39-.39-1.02-.39-1.41 0l-1.83 1.83 3.75 3.75 1.83-1.83z" fill="#c5ccd3"/></svg>
<svg class="r" style="left:1528.7px;top:109.3px" width="29.3" height="29.3" viewBox="0 0 24 24"><path d="M6 19c0 1.1.9 2 2 2h8c1.1 0 2-.9 2-2V7H6v12zm2.46-7.12l1.41-1.41L12 12.59l2.12-2.12 1.41 1.41L13.41 14l2.12 2.12-1.41 1.41L12 15.41l-2.12 2.12-1.41-1.41L10.59 14l-2.13-2.12zM15.5 4l-1-1h-5l-1 1H5v2h14V4z" fill="#f44336"/></svg>
<div class="r" style="left:0px;top:149px;width:1587px;height:1px;background:#dcdcdc;"></div>
<div class="t" style="left:29.5px;top:171.0px;font-size:16px;color:#333">4</div>
<div class="t" style="left:279.5px;top:171.0px;font-size:16px;color:#333">Age</div>
<div class="t" style="left:529.5px;top:167.7px;font-size:16px;color:#333">data.Age</div>
<div class="t" style="left:780.0px;top:171.0px;font-size:16px;color:#333">No</div>
<div class="t" style="left:1030.2px;top:171.0px;font-size:16px;color:#333">No</div>
<svg class="r" style="left:189.7px;top:163.6px" width="30.5" height="30.5" viewBox="0 0 24 24"><path d="M3 17.25V21h3.75L17.81 9.94l-3.75-3.75L3 17.25zM20.71 7.04c.39-.39.39-1.02 0-1.41l-2.34-2.34c-.39-.39-1.02-.39-1.41 0l-1.83 1.83 3.75 3.75 1.83-1.83z" fill="#c5ccd3"/></svg>
<svg class="r" style="left:439.70000000000005px;top:163.6px" width="30.5" height="30.5" viewBox="0 0 24 24"><path d="M3 17.25V21h3.75L17.81 9.94l-3.75-3.75L3 17.25zM20.71 7.04c.39-.39.39-1.02 0-1.41l-2.34-2.34c-.39-.39-1.02-.39-1.41 0l-1.83 1.83 3.75 3.75 1.83-1.83z" fill="#c5ccd3"/></svg>
<svg class="r" style="left:689.7px;top:163.6px" width="30.5" height="30.5" viewBox="0 0 24 24"><path d="M3 17.25V21h3.75L17.81 9.94l-3.75-3.75L3 17.25zM20.71 7.04c.39-.39.39-1.02 0-1.41l-2.34-2.34c-.39-.39-1.02-.39-1.41 0l-1.83 1.83 3.75 3.75 1.83-1.83z" fill="#c5ccd3"/></svg>
<svg class="r" style="left:939.7px;top:163.6px" width="30.5" height="30.5" viewBox="0 0 24 24"><path d="M3 17.25V21h3.75L17.81 9.94l-3.75-3.75L3 17.25zM20.71 7.04c.39-.39.39-1.02 0-1.41l-2.34-2.34c-.39-.39-1.02-.39-1.41 0l-1.83 1.83 3.75 3.75 1.83-1.83z" fill="#c5ccd3"/></svg>
<svg class="r" style="left:1189.7px;top:163.6px" width="30.5" height="30.5" viewBox="0 0 24 24"><path d="M3 17.25V21h3.75L17.81 9.94l-3.75-3.75L3 17.25zM20.71 7.04c.39-.39.39-1.02 0-1.41l-2.34-2.34c-.39-.39-1.02-.39-1.41 0l-1.83 1.83 3.75 3.75 1.83-1.83z" fill="#c5ccd3"/></svg>
<svg class="r" style="left:1439.7px;top:163.6px" width="30.5" height="30.5" viewBox="0 0 24 24"><path d="M3 17.25V21h3.75L17.81 9.94l-3.75-3.75L3 17.25zM20.71 7.04c.39-.39.39-1.02 0-1.41l-2.34-2.34c-.39-.39-1.02-.39-1.41 0l-1.83 1.83 3.75 3.75 1.83-1.83z" fill="#c5ccd3"/></svg>
<svg class="r" style="left:1528.7px;top:159.3px" width="29.3" height="29.3" viewBox="0 0 24 24"><path d="M6 19c0 1.1.9 2 2 2h8c1.1 0 2-.9 2-2V7H6v12zm2.46-7.12l1.41-1.41L12 12.59l2.12-2.12 1.41 1.41L13.41 14l2.12 2.12-1.41 1.41L12 15.41l-2.12 2.12-1.41-1.41L10.59 14l-2.13-2.12zM15.5 4l-1-1h-5l-1 1H5v2h14V4z" fill="#f44336"/></svg>
<div class="r" style="left:0px;top:199px;width:1587px;height:1px;background:#dcdcdc;"></div>
<div class="t" style="left:29.5px;top:221.0px;font-size:16px;color:#333">5</div>
<div class="t" style="left:279.5px;top:221.0px;font-size:16px;color:#333">gender</div>
<div class="t" style="left:529.5px;top:217.7px;font-size:16px;color:#333">data.Gender</div>
<div class="t" style="left:780.0px;top:221.0px;font-size:16px;color:#333">No</div>
<div class="t" style="left:1030.2px;top:221.0px;font-size:16px;color:#333">No</div>
<svg class="r" style="left:189.7px;top:213.6px" width="30.5" height="30.5" viewBox="0 0 24 24"><path d="M3 17.25V21h3.75L17.81 9.94l-3.75-3.75L3 17.25zM20.71 7.04c.39-.39.39-1.02 0-1.41l-2.34-2.34c-.39-.39-1.02-.39-1.41 0l-1.83 1.83 3.75 3.75 1.83-1.83z" fill="#c5ccd3"/></svg>
<svg class="r" style="left:439.70000000000005px;top:213.6px" width="30.5" height="30.5" viewBox="0 0 24 24"><path d="M3 17.25V21h3.75L17.81 9.94l-3.75-3.75L3 17.25zM20.71 7.04c.39-.39.39-1.02 0-1.41l-2.34-2.34c-.39-.39-1.02-.39-1.41 0l-1.83 1.83 3.75 3.75 1.83-1.83z" fill="#c5ccd3"/></svg>
<svg class="r" style="left:689.7px;top:213.6px" width="30.5" height="30.5" viewBox="0 0 24 24"><path d="M3 17.25V21h3.75L17.81 9.94l-3.75-3.75L3 17.25zM20.71 7.04c.39-.39.39-1.02 0-1.41l-2.34-2.34c-.39-.39-1.02-.39-1.41 0l-1.83 1.83 3.75 3.75 1.83-1.83z" fill="#c5ccd3"/></svg>
<svg class="r" style="left:939.7px;top:213.6px" width="30.5" height="30.5" viewBox="0 0 24 24"><path d="M3 17.25V21h3.75L17.81 9.94l-3.75-3.75L3 17.25zM20.71 7.04c.39-.39.39-1.02 0-1.41l-2.34-2.34c-.39-.39-1.02-.39-1.41 0l-1.83 1.83 3.75 3.75 1.83-1.83z" fill="#c5ccd3"/></svg>
<svg class="r" style="left:1189.7px;top:213.6px" width="30.5" height="30.5" viewBox="0 0 24 24"><path d="M3 17.25V21h3.75L17.81 9.94l-3.75-3.75L3 17.25zM20.71 7.04c.39-.39.39-1.02 0-1.41l-2.34-2.34c-.39-.39-1.02-.39-1.41 0l-1.83 1.83 3.75 3.75 1.83-1.83z" fill="#c5ccd3"/></svg>
<svg class="r" style="left:1439.7px;top:213.6px" width="30.5" height="30.5" viewBox="0 0 24 24"><path d="M3 17.25V21h3.75L17.81 9.94l-3.75-3.75L3 17.25zM20.71 7.04c.39-.39.39-1.02 0-1.41l-2.34-2.34c-.39-.39-1.02-.39-1.41 0l-1.83 1.83 3.75 3.75 1.83-1.83z" fill="#c5ccd3"/></svg>
<svg class="r" style="left:1528.7px;top:209.3px" width="29.3" height="29.3" viewBox="0 0 24 24"><path d="M6 19c0 1.1.9 2 2 2h8c1.1 0 2-.9 2-2V7H6v12zm2.46-7.12l1.41-1.41L12 12.59l2.12-2.12 1.41 1.41L13.41 14l2.12 2.12-1.41 1.41L12 15.41l-2.12 2.12-1.41-1.41L10.59 14l-2.13-2.12zM15.5 4l-1-1h-5l-1 1H5v2h14V4z" fill="#f44336"/></svg>
<div class="r" style="left:0px;top:249px;width:1587px;height:1px;background:#dcdcdc;"></div>
<div class="t" style="left:29.5px;top:271.0px;font-size:16px;color:#333">6</div>
<div class="t" style="left:279.5px;top:271.0px;font-size:16px;color:#333">city</div>
<div class="t" style="left:529.5px;top:267.7px;font-size:16px;color:#333">data.City</div>
<div class="t" style="left:780.0px;top:271.0px;font-size:16px;color:#333">No</div>
<div class="t" style="left:1030.2px;top:271.0px;font-size:16px;color:#333">No</div>
<svg class="r" style="left:189.7px;top:263.6px" width="30.5" height="30.5" viewBox="0 0 24 24"><path d="M3 17.25V21h3.75L17.81 9.94l-3.75-3.75L3 17.25zM20.71 7.04c.39-.39.39-1.02 0-1.41l-2.34-2.34c-.39-.39-1.02-.39-1.41 0l-1.83 1.83 3.75 3.75 1.83-1.83z" fill="#c5ccd3"/></svg>
<svg class="r" style="left:439.70000000000005px;top:263.6px" width="30.5" height="30.5" viewBox="0 0 24 24"><path d="M3 17.25V21h3.75L17.81 9.94l-3.75-3.75L3 17.25zM20.71 7.04c.39-.39.39-1.02 0-1.41l-2.34-2.34c-.39-.39-1.02-.39-1.41 0l-1.83 1.83 3.75 3.75 1.83-1.83z" fill="#c5ccd3"/></svg>
<svg class="r" style="left:689.7px;top:263.6px" width="30.5" height="30.5" viewBox="0 0 24 24"><path d="M3 17.25V21h3.75L17.81 9.94l-3.75-3.75L3 17.25zM20.71 7.04c.39-.39.39-1.02 0-1.41l-2.34-2.34c-.39-.39-1.02-.39-1.41 0l-1.83 1.83 3.75 3.75 1.83-1.83z" fill="#c5ccd3"/></svg>
<svg class="r" style="left:939.7px;top:263.6px" width="30.5" height="30.5" viewBox="0 0 24 24"><path d="M3 17.25V21h3.75L17.81 9.94l-3.75-3.75L3 17.25zM20.71 7.04c.39-.39.39-1.02 0-1.41l-2.34-2.34c-.39-.39-1.02-.39-1.41 0l-1.83 1.83 3.75 3.75 1.83-1.83z" fill="#c5ccd3"/></svg>
<svg class="r" style="left:1189.7px;top:263.6px" width="30.5" height="30.5" viewBox="0 0 24 24"><path d="M3 17.25V21h3.75L17.81 9.94l-3.75-3.75L3 17.25zM20.71 7.04c.39-.39.39-1.02 0-1.41l-2.34-2.34c-.39-.39-1.02-.39-1.41 0l-1.83 1.83 3.75 3.75 1.83-1.83z" fill="#c5ccd3"/></svg>
<svg class="r" style="left:1439.7px;top:263.6px" width="30.5" height="30.5" viewBox="0 0 24 24"><path d="M3 17.25V21h3.75L17.81 9.94l-3.75-3.75L3 17.25zM20.71 7.04c.39-.39.39-1.02 0-1.41l-2.34-2.34c-.39-.39-1.02-.39-1.41 0l-1.83 1.83 3.75 3.75 1.83-1.83z" fill="#c5ccd3"/></svg>
<svg class="r" style="left:1528.7px;top:259.3px" width="29.3" height="29.3" viewBox="0 0 24 24"><path d="M6 19c0 1.1.9 2 2 2h8c1.1 0 2-.9 2-2V7H6v12zm2.46-7.12l1.41-1.41L12 12.59l2.12-2.12 1.41 1.41L13.41 14l2.12 2.12-1.41 1.41L12 15.41l-2.12 2.12-1.41-1.41L10.59 14l-2.13-2.12zM15.5 4l-1-1h-5l-1 1H5v2h14V4z" fill="#f44336"/></svg>
<div class="r" style="left:0px;top:299px;width:1587px;height:1px;background:#dcdcdc;"></div>
<div class="t" style="left:29.5px;top:321.0px;font-size:16px;color:#333">7</div>
<div class="t" style="left:279.5px;top:321.0px;font-size:16px;color:#333"></div>
<div class="t" style="left:529.5px;top:317.7px;font-size:16px;color:#333"></div>
<div class="t" style="left:780.0px;top:321.0px;font-size:16px;color:#333"></div>
<div class="t" style="left:1030.2px;top:321.0px;font-size:16px;color:#333"></div>
<svg class="r" style="left:189.7px;top:313.6px" width="30.5" height="30.5" viewBox="0 0 24 24"><path d="M3 17.25V21h3.75L17.81 9.94l-3.75-3.75L3 17.25zM20.71 7.04c.39-.39.39-1.02 0-1.41l-2.34-2.34c-.39-.39-1.02-.39-1.41 0l-1.83 1.83 3.75 3.75 1.83-1.83z" fill="#c5ccd3"/></svg>
<svg class="r" style="left:439.70000000000005px;top:313.6px" width="30.5" height="30.5" viewBox="0 0 24 24"><path d="M3 17.25V21h3.75L17.81 9.94l-3.75-3.75L3 17.25zM20.71 7.04c.39-.39.39-1.02 0-1.41l-2.34-2.34c-.39-.39-1.02-.39-1.41 0l-1.83 1.83 3.75 3.75 1.83-1.83z" fill="#c5ccd3"/></svg>
<svg class="r" style="left:689.7px;top:313.6px" width="30.5" height="30.5" viewBox="0 0 24 24"><path d="M3 17.25V21h3.75L17.81 9.94l-3.75-3.75L3 17.25zM20.71 7.04c.39-.39.39-1.02 0-1.41l-2.34-2.34c-.39-.39-1.02-.39-1.41 0l-1.83 1.83 3.75 3.75 1.83-1.83z" fill="#c5ccd3"/></svg>
<svg class="r" style="left:939.7px;top:313.6px" width="30.5" height="30.5" viewBox="0 0 24 24"><path d="M3 17.25V21h3.75L17.81 9.94l-3.75-3.75L3 17.25zM20.71 7.04c.39-.39.39-1.02 0-1.41l-2.34-2.34c-.39-.39-1.02-.39-1.41 0l-1.83 1.83 3.75 3.75 1.83-1.83z" fill="#c5ccd3"/></svg>
<svg class="r" style="left:1189.7px;top:313.6px" width="30.5" height="30.5" viewBox="0 0 24 24"><path d="M3 17.25V21h3.75L17.81 9.94l-3.75-3.75L3 17.25zM20.71 7.04c.39-.39.39-1.02 0-1.41l-2.34-2.34c-.39-.39-1.02-.39-1.41 0l-1.83 1.83 3.75 3.75 1.83-1.83z" fill="#c5ccd3"/></svg>
<svg class="r" style="left:1439.7px;top:313.6px" width="30.5" height="30.5" viewBox="0 0 24 24"><path d="M3 17.25V21h3.75L17.81 9.94l-3.75-3.75L3 17.25zM20.71 7.04c.39-.39.39-1.02 0-1.41l-2.34-2.34c-.39-.39-1.02-.39-1.41 0l-1.83 1.83 3.75 3.75 1.83-1.83z" fill="#c5ccd3"/></svg>
<svg class="r" style="left:1528.7px;top:309.3px" width="29.3" height="29.3" viewBox="0 0 24 24"><path d="M6 19c0 1.1.9 2 2 2h8c1.1 0 2-.9 2-2V7H6v12zm2.46-7.12l1.41-1.41L12 12.59l2.12-2.12 1.41 1.41L13.41 14l2.12 2.12-1.41 1.41L12 15.41l-2.12 2.12-1.41-1.41L10.59 14l-2.13-2.12zM15.5 4l-1-1h-5l-1 1H5v2h14V4z" fill="#f44336"/></svg>
<div class="r" style="left:0px;top:349px;width:1587px;height:1px;background:#dcdcdc;"></div>
</div>
<div class="r" style="left:1876px;top:526px;width:21px;height:318px;background:#f1f1f1;"></div>
<div class="r" style="left:1878px;top:547px;width:17px;height:117px;background:#c1c1c1;"></div>
<svg class="r" style="left:1881px;top:533px;" width="11" height="7" viewBox="0 0 11 7"><path d="M0.5 6.5L5.5 1l5 5.5z" fill="#a3a3a3"/></svg>
<svg class="r" style="left:1881px;top:830.5px;" width="11" height="7" viewBox="0 0 11 7"><path d="M0.5 0.5h10L5.5 6z" fill="#505050"/></svg>
</body></html>
